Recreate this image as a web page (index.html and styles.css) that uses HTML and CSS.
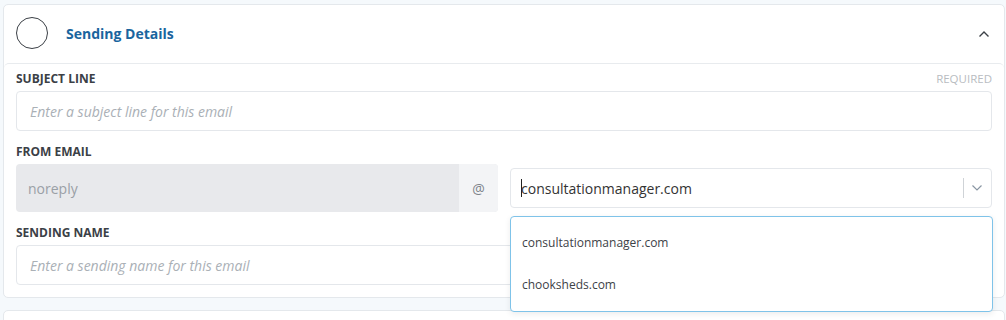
FILE: index.html
```html
<!DOCTYPE html>
<html lang="en">
<head>
    <meta charset="UTF-8">
    <title>Sending Details</title>
    <link rel="stylesheet" href="styles.css">
</head>
<body>
    <div class="card">
        <div class="card-head">
            <span class="step"></span>
            <h2 class="title">Sending Details</h2>
            <svg class="toggle" width="12" height="8" viewBox="0 0 12 8"><path d="M1.5 6.5 L6 2 L10.5 6.5" fill="none" stroke="#3b4046" stroke-width="1.4"/></svg>
        </div>
        <div class="card-body">
            <div class="field">
                <div class="label-row">
                    <label>Subject line</label>
                    <span class="req">Required</span>
                </div>
                <div class="input placeholder">Enter a subject line for this email</div>
            </div>
            <div class="field">
                <div class="label-row"><label>From email</label></div>
                <div class="email-row">
                    <div class="local">
                        <span class="local-text">noreply</span>
                        <span class="addon">@</span>
                    </div>
                    <div class="domain">
                        <div class="select">
                            <span class="value"><span class="caret"></span>consultationmanager.com</span>
                            <span class="sep"></span>
                            <svg class="arrow" width="12" height="8" viewBox="0 0 12 8"><path d="M1.5 1.5 L6 6 L10.5 1.5" fill="none" stroke="#8a96a3" stroke-width="1.2"/></svg>
                        </div>
                        <ul class="menu">
                            <li>consultationmanager.com</li>
                            <li>chooksheds.com</li>
                        </ul>
                    </div>
                </div>
            </div>
            <div class="field last">
                <div class="label-row"><label>Sending name</label></div>
                <div class="input placeholder">Enter a sending name for this email</div>
            </div>
        </div>
    </div>
    <div class="card next"></div>
</body>
</html>
```

FILE: styles.css
```css
body {
    margin: 0;
    padding: 4px 1px 0 3px;
    background: #f5f9fc;
    font-family: "Open Sans", Arial, sans-serif;
    color: #3b4046;
}
.card {
    background: #fff;
    border: 1px solid #e4e8ec;
    border-radius: 5px;
}
.card.next {
    margin-top: 12px;
    height: 20px;
}
.card-head {
    display: flex;
    align-items: center;
    height: 56px;
    padding: 0 14px 2px 12px;
}
.step {
    width: 30px;
    height: 30px;
    border: 1px solid #3b4046;
    border-radius: 50%;
}
.title {
    margin: 0 0 0 18px;
    flex: 1;
    font-size: 14px;
    font-weight: 700;
    color: #1a659e;
}
.toggle {
    margin-top: 1px;
}
.card-body {
    border-top: 1px solid #e8ebee;
    border-radius: 5px 5px 0 0;
    padding: 6px 12px 12px;
}
.field {
    margin-bottom: 12px;
}
.field.last {
    margin-bottom: 0;
}
.label-row {
    display: flex;
    justify-content: space-between;
    align-items: center;
    height: 16px;
    margin-bottom: 5px;
}
.label-row label {
    font-size: 12px;
    font-weight: 700;
    text-transform: uppercase;
    color: #3b4046;
}
.req {
    font-size: 11.5px;
    text-transform: uppercase;
    color: #b8bcc1;
}
.input {
    height: 38px;
    border: 1px solid #e4e7eb;
    border-radius: 4px;
    padding: 0 13px;
    display: flex;
    align-items: center;
    font-size: 14px;
}
.placeholder {
    font-style: italic;
    color: #aab0b6;
}
.email-row {
    display: flex;
    align-items: center;
    gap: 12px;
}
.local {
    flex: 1;
    display: flex;
    height: 48px;
    border-radius: 4px;
    overflow: hidden;
    background: #e8e9ec;
}
.local-text {
    flex: 1;
    display: flex;
    align-items: center;
    padding-left: 12px;
    font-size: 14px;
    color: #9aa0a6;
}
.addon {
    width: 39px;
    display: flex;
    align-items: center;
    justify-content: center;
    background: #f3f4f6;
    font-size: 14px;
    color: #7d838a;
}
.domain {
    flex: 1;
    position: relative;
}
.select {
    height: 38px;
    border: 1px solid #e4e7eb;
    border-radius: 4px;
    display: flex;
    align-items: center;
    padding: 0 8px 0 10px;
}
.value {
    flex: 1;
    font-size: 14px;
    color: #333;
    display: flex;
    align-items: center;
}
.caret {
    width: 1px;
    height: 18px;
    background: #222;
    margin-right: -1px;
}
.sep {
    width: 1px;
    height: 20px;
    background: #cfd3d7;
    margin-right: 7px;
}
.menu {
    position: absolute;
    top: 48px;
    left: 0;
    right: -1px;
    margin: 0;
    padding: 5px 0;
    list-style: none;
    background: #fff;
    border: 1px solid #7fc3e9;
    border-radius: 4px;
    box-shadow: 0 2px 6px rgba(0, 0, 0, 0.08);
}
.menu li {
    height: 42px;
    line-height: 42px;
    padding-left: 11px;
    font-size: 12px;
    color: #3d4247;
}
```
